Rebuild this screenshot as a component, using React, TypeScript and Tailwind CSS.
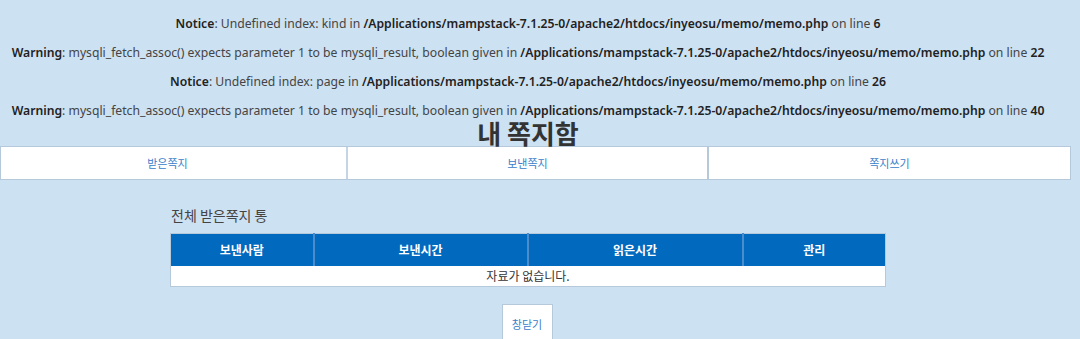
const FILE = '/Applications/mampstack-7.1.25-0/apache2/htdocs/inyeosu/memo/memo.php'

const ERRORS = [
  { kind: 'Notice', msg: 'Undefined index: kind in ', line: '6' },
  { kind: 'Warning', msg: 'mysqli_fetch_assoc() expects parameter 1 to be mysqli_result, boolean given in ', line: '22' },
  { kind: 'Notice', msg: 'Undefined index: page in ', line: '26' },
  { kind: 'Warning', msg: 'mysqli_fetch_assoc() expects parameter 1 to be mysqli_result, boolean given in ', line: '40' },
]

const font = "font-['Noto_Sans','Noto_Sans_CJK_KR',sans-serif]"

export default function App() {
  return (
    <div className={`w-[1080px] h-[339px] overflow-hidden bg-[#cce1f2] text-center ${font}`}>
      {/* php errors */}
      <div className="pt-[16px] pr-[24px] flex flex-col gap-[13px] text-[12.2px] leading-[16px] text-[#444]">
        {ERRORS.map((e, i) => (
          <div key={i} className="whitespace-nowrap">
            <b className="font-semibold text-[#222]">{e.kind}</b>: {e.msg}
            <b className="font-semibold text-[#222]">{FILE}</b> on line{' '}
            <b className="font-semibold text-[#222]">{e.line}</b>
          </div>
        ))}
      </div>

      <h1 className="mt-[1px] pr-[24px] text-[26px] leading-[26px] font-bold text-[#333] font-['Noto_Sans_CJK_KR',sans-serif]">
        내 쪽지함
      </h1>

      {/* tabs */}
      <div className="flex w-[1071px] h-[34px] border border-[#b5c9db] bg-white text-[11px] text-[#3a80c9] font-['Noto_Sans_CJK_KR',sans-serif]">
        <div className="w-[347px] pr-[12px] flex items-center justify-center border-r-2 border-[#c4d6e6]">받은쪽지</div>
        <div className="w-[361px] flex items-center justify-center border-r-2 border-[#b5c9db]">보낸쪽지</div>
        <div className="flex-1 flex items-center justify-center">쪽지쓰기</div>
      </div>

      <div className="w-[716px] ml-[170px] mt-[25px] text-left">
        <div className="pl-[1px] text-[14px] leading-[20px] text-[#444] font-['Noto_Sans_CJK_KR',sans-serif]">전체 받은쪽지 통</div>
        <table className="mt-[8px] w-[716px] border-collapse border border-[#b5c9db] font-['Noto_Sans_CJK_KR',sans-serif]">
          <thead>
            <tr className="h-[32px] bg-[#0169be] text-white text-[12px] font-bold">
              <th className="w-[143px] text-center border-r-2 border-[#4a8ccc]">보낸사람</th>
              <th className="w-[214px] text-center border-r-2 border-[#4a8ccc]">보낸시간</th>
              <th className="w-[215px] text-center border-r-2 border-[#4a8ccc]">읽은시간</th>
              <th className="text-center">관리</th>
            </tr>
          </thead>
          <tbody>
            <tr className="h-[21px] bg-white">
              <td colSpan={4} className="text-center text-[12px] text-[#333] leading-[20px]">자료가 없습니다.</td>
            </tr>
          </tbody>
        </table>
      </div>

      <div className="flex justify-center mt-[17px] pr-[26px]">
        <button className="w-[51px] h-[40px] bg-white border border-[#b5c9db] text-[11px] text-[#3a80c9] font-['Noto_Sans_CJK_KR',sans-serif]">
          창닫기
        </button>
      </div>
    </div>
  )
}
